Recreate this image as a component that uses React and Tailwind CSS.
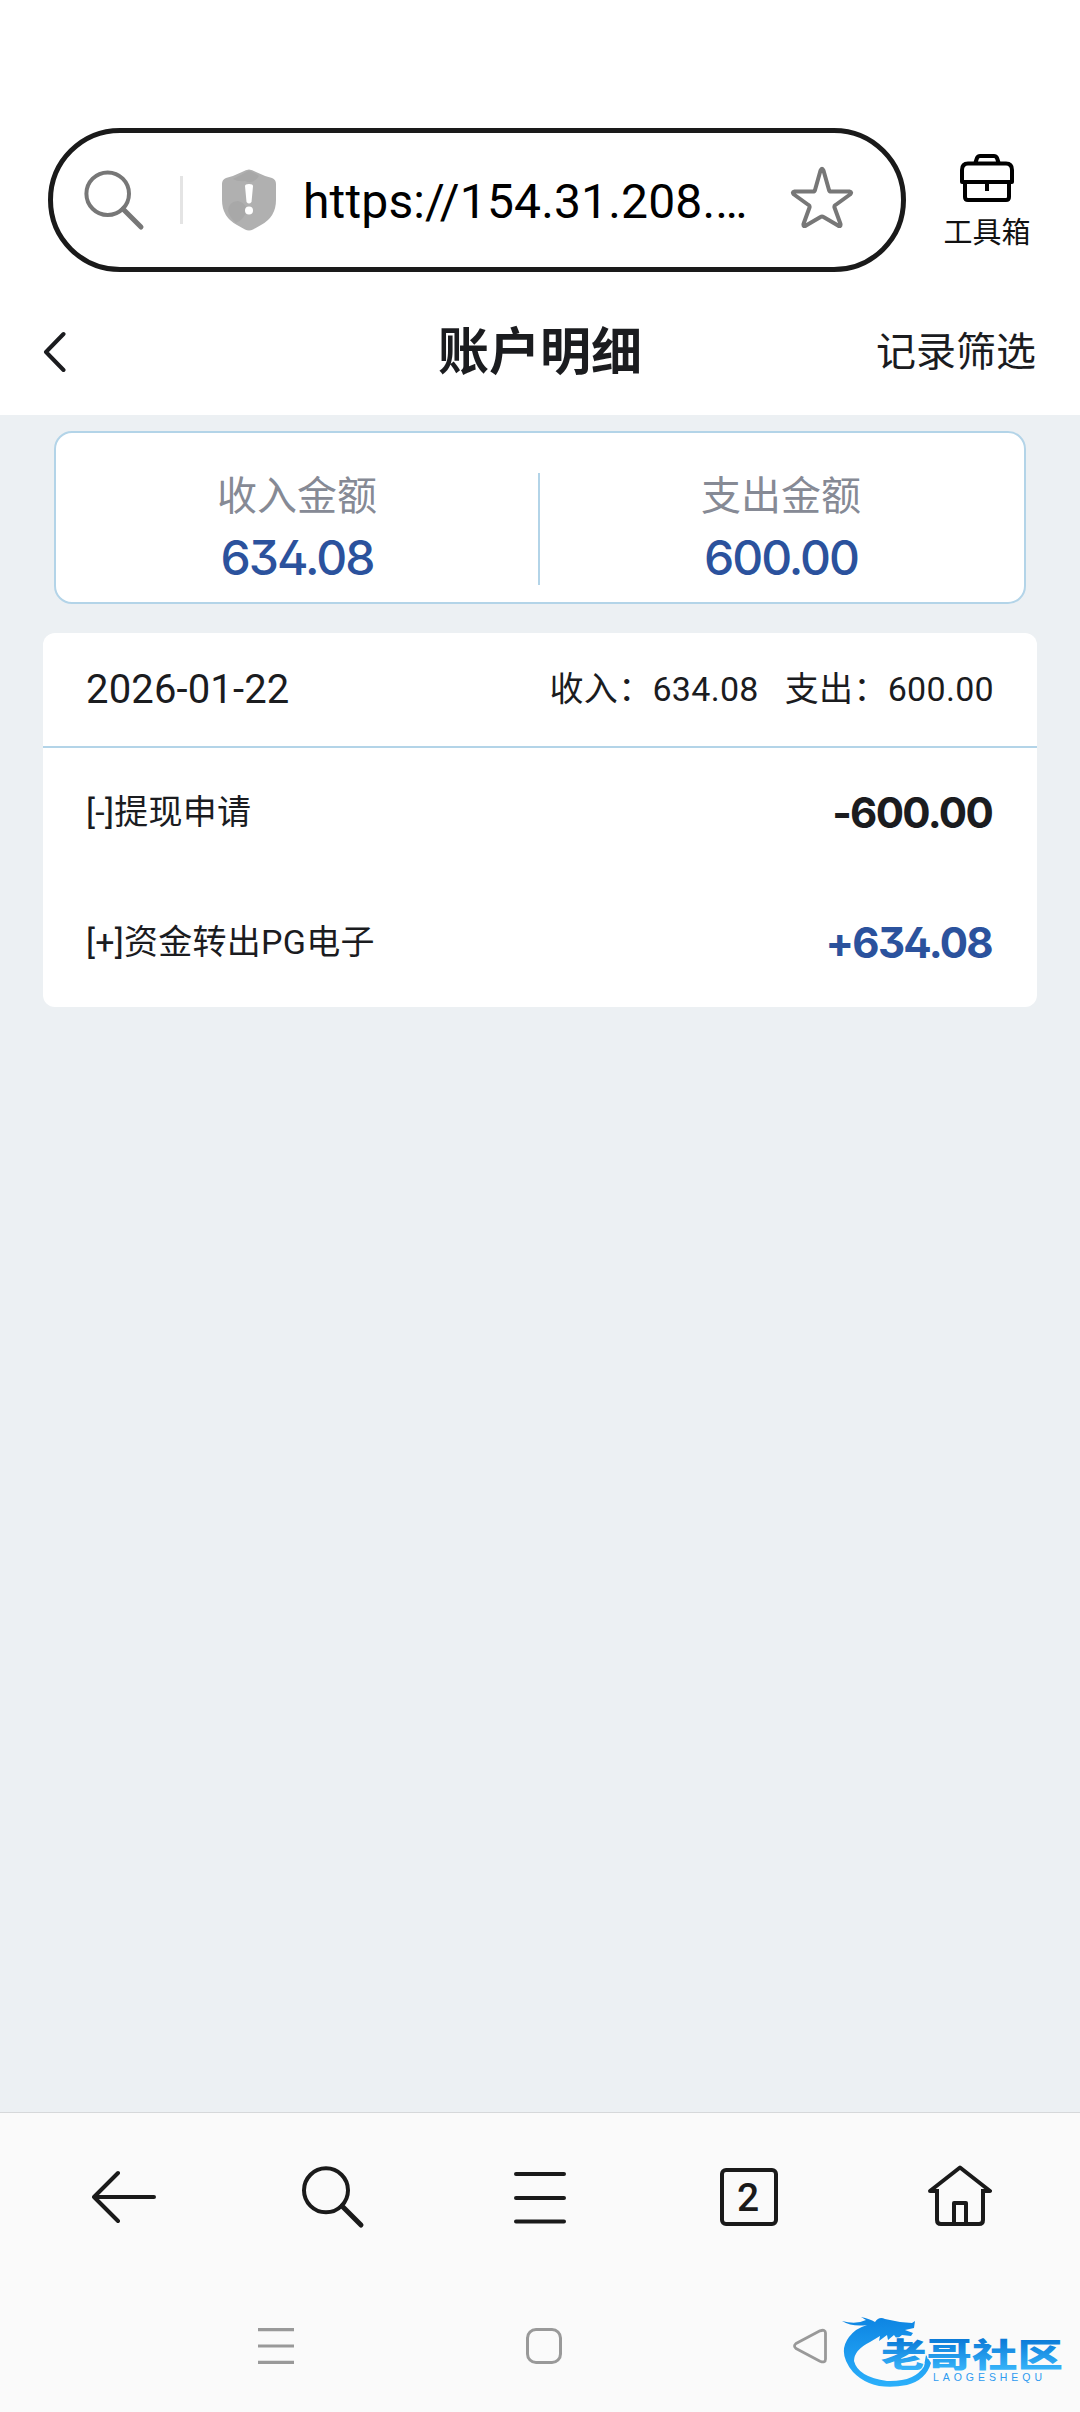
const FONT = "font-[Roboto,'Noto_Sans_CJK_SC',sans-serif]"
const NUM = "font-[Inter,Roboto,sans-serif] [font-feature-settings:'cv02','cv09']"

const totals = [
  { label: '收入金额', value: '634.08' },
  { label: '支出金额', value: '600.00' },
]

const records = [
  { title: '[-]提现申请', amount: '-600.00', color: 'text-[#1b1c1f]' },
  { title: '[+]资金转出PG电子', amount: '+634.08', color: 'text-[#2b529d]' },
]

function AddressBar() {
  return (
    <div className="flex items-center h-[144px] mt-[128px] pl-12 shrink-0">
      <div className="flex items-center w-[858px] h-[144px] rounded-full border-[5px] border-[#1a1a1a]">
        <svg className="w-[64px] h-[64px] ml-[29px] shrink-0" viewBox="0 0 64 64" fill="none" stroke="#777" strokeWidth="4">
          <circle cx="25.7" cy="25.7" r="21.3" />
          <path d="M41 41 59 59" strokeWidth="5" strokeLinecap="round" />
        </svg>
        <div className="w-[3px] h-12 ml-[34px] bg-[#e4e4e4] shrink-0" />
        <svg className="w-[56px] h-[62px] ml-[38px] shrink-0" viewBox="0 0 56 62">
          <path d="M28 .5Q31 .5 35 3 43 7 51 9 55 10.500 55 15V31Q55 48 40 56L32 60.500Q28 62.500 24 60.500L16 56Q1 48 1 31V15Q1 10.500 5 9 13 7 21 3 25 .5 28 .5Z" fill="#b0b0b0" />
          <path d="M12 10Q20 6 28 1.500 34 4 38 7 32 16 24 12 17 13 12 10ZM7 42Q8 32 17 32 23 33 26 40 24 50 15 54 9 49 7 42Z" fill="#a8a8a8" />
          <path d="M24 17Q24 15 28 15T32 17L30.500 33Q28 36 25.500 33Z" fill="#fff" />
          <circle cx="28" cy="41.500" r="4" fill="#fff" />
        </svg>
        <span className="ml-[26px] w-[446px] mt-[3px] text-5xl text-black whitespace-nowrap tracking-[0.15px]">https://154.31.208.…</span>
        <svg className="w-[64px] h-[64px] ml-[41px] mb-2 shrink-0" viewBox="0 0 64 64" fill="none" stroke="#777" strokeWidth="4" strokeLinejoin="round">
          <path d="M30.500 6.500Q32 3 33.500 6.500L39 26Q39.500 27.500 41 27.500H59.500Q62.500 28 60 30.500L45.500 41Q44 42 44.500 43.500L50.500 60Q51 63.500 48 61.500L33.500 53Q32 52 30.500 53L16 61.500Q13 63.500 13.500 60L19.500 43.500Q20 42 18.500 41L4 30.500Q1.500 28 4.500 27.500H23Q24.500 27.500 25 26Z" />
        </svg>
      </div>
      <div className="flex flex-col items-center w-[90px] ml-[36px] mt-1.5">
        <svg className="w-[54px] h-[48px]" viewBox="0 0 54 48" fill="none" stroke="#000" strokeWidth="4" strokeLinejoin="round">
          <path d="M15 10 17 4Q18 2 20 2H34Q36 2 37 4L39 10M2 28V16Q2 9.500 8 9.500H46Q52 9.500 52 16V28ZM5 28V43Q5 46 8 46H46Q49 46 49 43V28M27 28V37" />
        </svg>
        <span className="mt-3 text-[29px] leading-[38px] text-[#111] whitespace-nowrap">工具箱</span>
      </div>
    </div>
  )
}

function PageHeader() {
  return (
    <div className="grid grid-cols-[1fr_auto_1fr] items-center h-[143px] px-11 pt-[18px] shrink-0">
      <svg className="w-[24px] h-[44px] -ml-0.5" viewBox="0 0 24 44" fill="none" stroke="#1b1c1f" strokeWidth="4" strokeLinecap="round" strokeLinejoin="round">
        <path d="M21.500 3 4 21 21.500 39" />
      </svg>
      <h1 className="text-[51px] font-bold leading-none text-[#1b1c1f]">账户明细</h1>
      <span className="text-[40px] leading-none text-[#1b1c1f] text-right mt-px">记录筛选</span>
    </div>
  )
}

function Totals() {
  return (
    <div className="flex items-center mx-[54px] mt-4 h-[173px] rounded-[18px] border-2 border-[#b3d4e8] bg-white shrink-0">
      {totals.map((t, i) => (
        <div key={t.label} className={`h-[112px] mt-[22px] flex flex-col items-center ${i === 0 ? 'w-[484px] border-r-2 border-[#b3d4e8]' : 'w-[484px] pr-0.5'}`}>
          <span className="text-[40px] leading-[48px] text-[#868a95]">{t.label}</span>
          <span className={`${NUM} mt-2.5 text-[48px] leading-[54px] font-medium tracking-[-2px] text-[#2b529d]`}>{t.value}</span>
        </div>
      ))}
    </div>
  )
}

function DayCard() {
  return (
    <div className="mx-[43px] mt-[29px] rounded-xl bg-white text-[#1b1c1f] shrink-0">
      <div className="flex items-center justify-between h-[115px] px-[43px] border-b-2 border-[#b3d4e8]">
        <span className="text-[40px] tracking-[0.15px]">2026-01-22</span>
        <div className="flex gap-[26px] text-[34px] tracking-[0.3px]">
          <span>收入：634.08</span>
          <span>支出：600.00</span>
        </div>
      </div>
      {records.map(r => (
        <div key={r.title} className="flex items-center justify-between h-[129.500px] pl-[43px] pr-[45px]">
          <span className="text-[34px] tracking-[0.250px]">{r.title}</span>
          <span className={`${NUM} text-[42px] font-bold tracking-[-1.700px] ${r.color}`}>{r.amount}</span>
        </div>
      ))}
    </div>
  )
}

function Toolbar() {
  return (
    <div className="flex items-start justify-between h-[179px] pl-[92px] pr-[88px] pt-[52px] border-t border-[#d6d8da]">
      <svg className="size-16" viewBox="0 0 64 64" fill="none" stroke="#1a1a1a" strokeWidth="4" strokeLinecap="round" strokeLinejoin="round">
        <path d="M62 32H2M26 8 2 32 26 56" />
      </svg>
      <svg className="size-16" viewBox="0 0 64 64" fill="none" stroke="#1a1a1a" strokeWidth="4">
        <circle cx="25" cy="25.300" r="22" />
        <path d="M41 41 60 60" strokeWidth="5" strokeLinecap="round" />
      </svg>
      <svg className="size-16" viewBox="0 0 64 64" fill="none" stroke="#1a1a1a" strokeWidth="4" strokeLinecap="round">
        <path d="M6 9H54M6 33H54M6 56.500H54" />
      </svg>
      <div className="size-16 pl-px pt-[3px]">
        <div className="flex items-center justify-center size-[58px] rounded-md border-4 border-[#1a1a1a] pr-0.5 pt-0.5 text-[39px] font-medium text-[#1a1a1a]">2</div>
      </div>
      <svg className="size-16" viewBox="0 0 64 64" fill="none" stroke="#1a1a1a" strokeWidth="4" strokeLinejoin="round">
        <path d="M9 26H2L32 2.500 62 26H55M9 24V55Q9 59 13 59H51Q55 59 55 55V24M26 58V38H38V58" />
      </svg>
    </div>
  )
}

function Logo() {
  return (
    <svg className="w-[224px] h-[80px]" viewBox="0 0 224 80">
      <defs>
        <linearGradient id="swirl" x1="0" y1="0" x2="0" y2="1">
          <stop offset="0" stopColor="#0d84e2" />
          <stop offset="1" stopColor="#2bb0fb" />
        </linearGradient>
        <linearGradient id="word" x1="0" y1="0" x2="0" y2="1">
          <stop offset="0.200" stopColor="#0a78d6" />
          <stop offset="0.900" stopColor="#38b6fb" />
        </linearGradient>
      </defs>
      <path d="M0 10Q14 14 24 9L19 6Q28 8 33 11 37 5 43 8L58 11 70 12 73 10 72 17 63 19 71 22 69 25 60 24 55 28 52 24 46 29 45 24 37 30 38 25 28 31Q12 39 12 50 16 66 45 70 73 71 82 55L84 44 89 52Q84 69 65 74 30 81 11 61 -5 42 7 26 14 17 25 14 10 16 0 10Z" fill="url(#swirl)" />
      <text transform="translate(39 55.500) scale(1.400 1)" fontFamily="'Noto Sans CJK SC',sans-serif" fontSize="32.500" fontWeight="900" stroke="#fafafa" strokeWidth="1.500" paintOrder="stroke" fill="url(#word)">老哥社区</text>
      <text x="91" y="70" textLength="109" fontFamily="'Liberation Sans',sans-serif" fontSize="10.500" fill="#2d9af0">LAOGESHEQU</text>
    </svg>
  )
}

function SystemNav() {
  return (
    <div className="flex items-start h-[121px] pl-[258px]">
      <svg className="w-9 h-9 mt-[37px]" viewBox="0 0 36 36" stroke="#999" strokeWidth="3.200">
        <path d="M0 1.600H36M0 18H36M0 34.400H36" />
      </svg>
      <div className="size-9 mt-[37px] ml-[232px] rounded-[10px] border-[3px] border-[#999]" />
      <svg className="w-[34px] h-9 mt-[37px] ml-[231px]" viewBox="0 0 34 36" fill="none" stroke="#999" strokeWidth="2.800" strokeLinejoin="round">
        <path d="M3 15.500 27 2.800Q32.500 1 32.500 5V31Q32.500 35.500 27 33.200L3 20.500Q0 18 3 15.500Z" />
      </svg>
      <div className="ml-[15px] mt-[20px]">
        <Logo />
      </div>
    </div>
  )
}

export default function App() {
  return (
    <div className={`${FONT} flex flex-col w-[1080px] h-[2412px] overflow-hidden bg-white`}>
      <AddressBar />
      <PageHeader />
      <main className="flex flex-col flex-1 bg-[#ecf0f3]">
        <Totals />
        <DayCard />
      </main>
      <footer className="bg-[#fafafa]">
        <Toolbar />
        <SystemNav />
      </footer>
    </div>
  )
}
